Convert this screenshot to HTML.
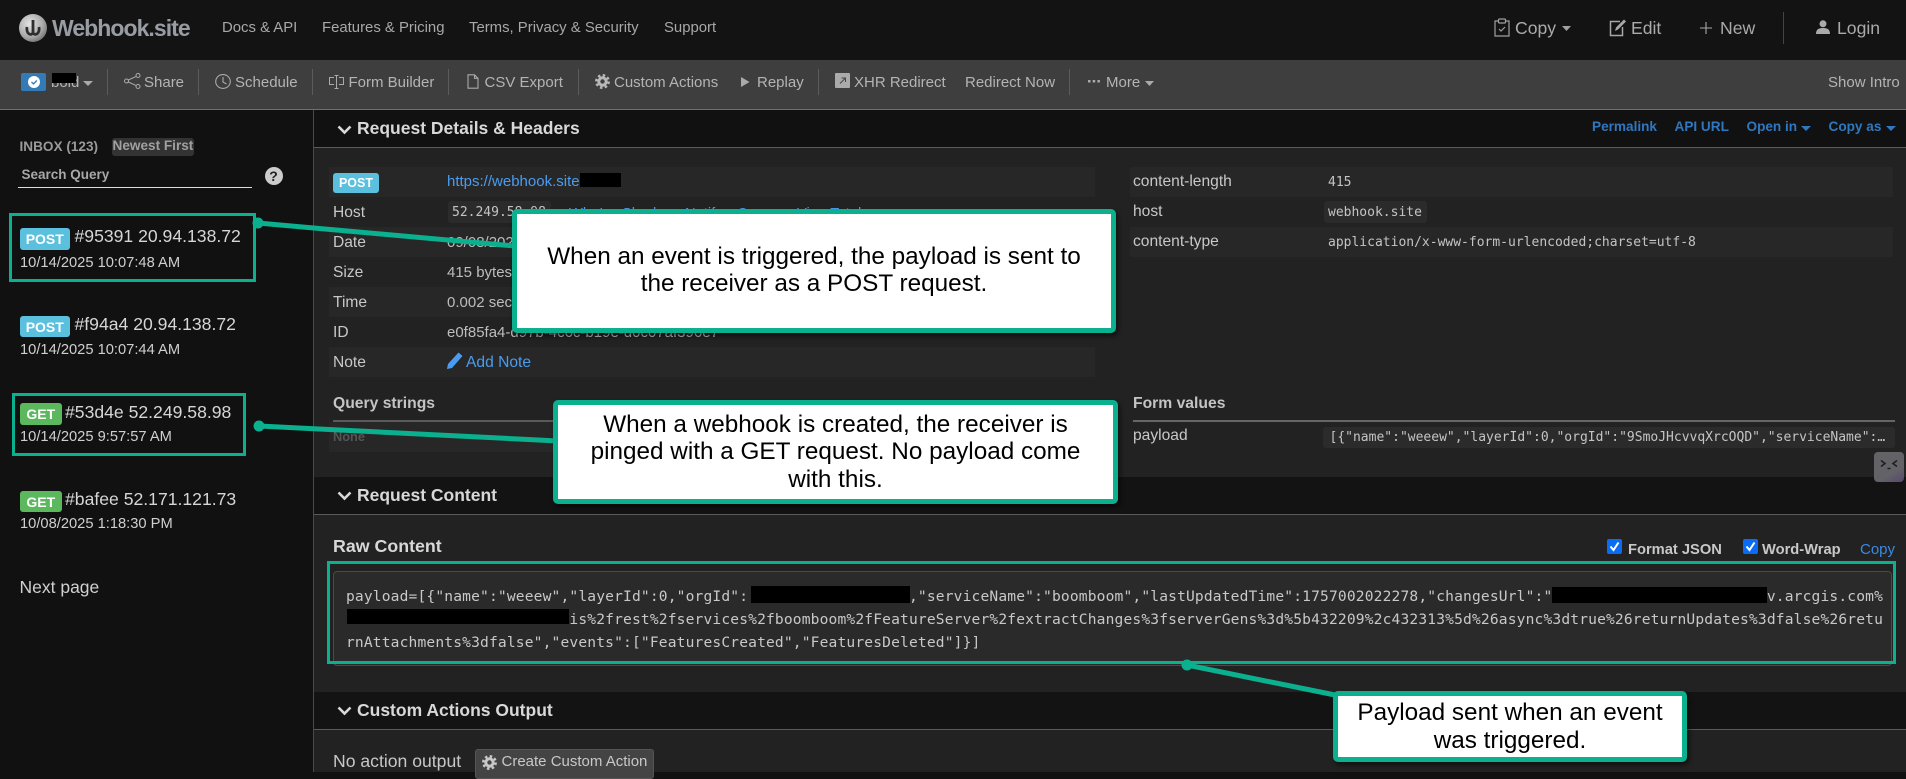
<!DOCTYPE html>
<html lang="en"><head><meta charset="utf-8"><title>Webhook.site</title>
<style>
*{box-sizing:border-box}
html,body{margin:0;padding:0;width:1906px;height:772px;overflow:hidden;background:#111;font-family:"Liberation Sans",Arial,sans-serif}
.a{position:absolute}
.t{position:absolute;white-space:pre;line-height:20px}
.nav{color:#a8a8a8;font-size:14.9px}
.navr{color:#aaa;font-size:17.6px}
.tb{color:#b4b4b4;font-size:15px}
.div{position:absolute;width:1px;top:69px;height:26px;background:#5c5c5c}
.lbl{color:#c8c8c8;font-size:15.6px}
.val{color:#bdbdbd;font-size:15px}
.h{color:#d8d8d8;font-size:17.5px;font-weight:bold}
.sub{color:#c4c4c4;font-size:15.7px;font-weight:bold}
.lnk{color:#2f78bf;font-size:13.6px;font-weight:bold}
.m{font-family:"DejaVu Sans Mono","Liberation Mono",monospace;font-size:13px;color:#c4c4c4}
.raw{font-family:"DejaVu Sans Mono","Liberation Mono",monospace;font-size:14.6px;letter-spacing:.15px;color:#c8c8c8}
.badge{position:absolute;border-radius:3px;color:#fff;font-weight:bold;font-size:14px;display:flex;align-items:center;justify-content:center}
.post{background:#5bc0de}.get{background:#5cb85c}
.ip{color:#d6d6d6;font-size:17.6px}
.dt{color:#cfcfcf;font-size:14.7px}
.k{position:absolute;background:#000}
.row{position:absolute;height:30px;background:#272727}
.chip{position:absolute;background:#2b2b2b;border-radius:3px}
.callout{position:absolute;background:#fff;border:5px solid #0bb08f;border-radius:5px;box-shadow:2px 3px 5px rgba(0,0,0,.55);color:#000;font-size:24.3px;text-align:center;display:flex;align-items:center;justify-content:center}
.gb{position:absolute;border:3px solid #0bb08f}
.blue{color:#4a9cf0}
svg{position:absolute;overflow:visible}
</style></head>
<body>
<!-- nav -->
<div class="a" style="left:0;top:0;width:1906px;height:60px;background:#131313"></div>
<svg style="left:19px;top:14px" width="28" height="28" viewBox="0 0 28 28"><defs><radialGradient id="g" cx=".38" cy=".35" r=".8"><stop offset="0" stop-color="#e4e4e4"/><stop offset=".6" stop-color="#a8a8a8"/><stop offset="1" stop-color="#5c5c5c"/></radialGradient></defs><circle cx="14" cy="14" r="14" fill="url(#g)"/><path d="M14 6v13M8 13c-1 7 4 9 6 6c2 3 7 1 6-6" fill="none" stroke="#2f2f2f" stroke-width="2.800"/></svg>
<div class="t" style="left:52px;top:18px;color:#989ca3;font-size:23px;font-weight:bold;letter-spacing:-.95px">Webhook.site</div>
<div class="t nav" style="left:222px;top:18px">Docs &amp; API</div>
<div class="t nav" style="left:322px;top:18px">Features &amp; Pricing</div>
<div class="t nav" style="left:469px;top:18px">Terms, Privacy &amp; Security</div>
<div class="t nav" style="left:664px;top:18px">Support</div>
<svg style="left:1494px;top:18px" width="16" height="19" viewBox="0 0 16 19" fill="none" stroke="#a0a0a0" stroke-width="1.200"><path d="M4.500 3H1v15h14V3h-3.500"/><rect x="4.500" y="1" width="7" height="4" rx="1"/><path d="M5 11l2 2 4-4"/></svg>
<div class="t navr" style="left:1515px;top:18px">Copy</div>
<svg style="left:1562px;top:26px" width="9" height="5"><path d="M0 0h9L4.500 5z" fill="#a0a0a0"/></svg>
<svg style="left:1609px;top:18px" width="18" height="19" viewBox="0 0 18 19" fill="none" stroke="#a8a8a8" stroke-width="1.500"><path d="M11 3.500H1.500v14h12V9"/><path d="M6 13l1-3.500 8-8 2 2-8 8z" fill="#a8a8a8" stroke="none"/></svg>
<div class="t navr" style="left:1631px;top:18px">Edit</div>
<svg style="left:1700px;top:22px" width="12" height="12"><path d="M6 0v12M0 6h12" stroke="#a8a8a8" stroke-width="1.100"/></svg>
<div class="t navr" style="left:1720px;top:18px">New</div>
<div class="a" style="left:1783px;top:12px;width:1px;height:32px;background:#444"></div>
<svg style="left:1816px;top:20px" width="14" height="14" viewBox="0 0 14 14"><circle cx="7" cy="3.800" r="3.500" fill="#aaa"/><path d="M0 14c0-5 3-6 7-6s7 1 7 6z" fill="#aaa"/></svg>
<div class="t navr" style="left:1837px;top:18px">Login</div>

<!-- toolbar -->
<div class="a" style="left:0;top:60px;width:1906px;height:49px;background:#3e3e3e"></div>
<div class="a" style="left:0;top:109px;width:1906px;height:1px;background:#6f6f6f"></div>
<div class="a" style="left:21px;top:73px;width:25px;height:18px;background:#337ab7;border-radius:2px"></div>
<svg style="left:27px;top:75px" width="14" height="14"><circle cx="7" cy="7" r="6" fill="#fff"/><path d="M4.500 7l2 2L9.800 5.500" fill="none" stroke="#337ab7" stroke-width="1.300"/></svg>
<div class="t tb" style="left:51px;top:73px">bold</div>
<div class="k" style="left:52px;top:73px;width:24px;height:10px"></div>
<svg style="left:83px;top:81px" width="10" height="5"><path d="M0 0h10L5 5z" fill="#aaa"/></svg>
<div class="div" style="left:107px"></div>
<svg style="left:124px;top:73px" width="17" height="16" viewBox="0 0 17 16" fill="none" stroke="#aaa" stroke-width="1"><circle cx="14" cy="2.500" r="2"/><circle cx="14" cy="13.500" r="2"/><circle cx="2.500" cy="8" r="2"/><path d="M4.300 7L12.200 3.400M4.300 9L12.200 12.600"/></svg>
<div class="t tb" style="left:144px;top:73px">Share</div>
<div class="div" style="left:198px"></div>
<svg style="left:215px;top:74px" width="16" height="15" viewBox="0 0 16 15" fill="none" stroke="#aaa" stroke-width="1.100"><ellipse cx="8" cy="7.500" rx="7.300" ry="6.900"/><path d="M8 3v5l3.500 2"/></svg>
<div class="t tb" style="left:235px;top:73px">Schedule</div>
<div class="div" style="left:312px"></div>
<svg style="left:329px;top:75px" width="15" height="14" viewBox="0 0 15 14" fill="none" stroke="#aaa" stroke-width="1"><path d="M5 2.500H.5v7H5M10 2.500h4.500v7H10M7.500 1v12M5.500.5h4M5.500 13.500h4"/></svg>
<div class="t tb" style="left:348.500px;top:73px">Form Builder</div>
<div class="div" style="left:448px"></div>
<svg style="left:467px;top:74px" width="12" height="15" viewBox="0 0 12 15" fill="none" stroke="#aaa" stroke-width="1.100"><path d="M1 .8h6.500L11 4.300v9.900H1zM7.500.8v3.500H11"/></svg>
<div class="t tb" style="left:484.500px;top:73px">CSV Export</div>
<div class="div" style="left:578px"></div>
<svg style="left:595px;top:74px" width="15" height="15" viewBox="0 0 15 15" fill="none" stroke="#b8b8b8"><circle cx="7.500" cy="7.500" r="3.700" stroke-width="3"/><circle cx="7.500" cy="7.500" r="6.200" stroke-width="2.500" stroke-dasharray="2.500 2.370"/></svg>
<div class="t tb" style="left:614px;top:73px">Custom Actions</div>
<svg style="left:741px;top:77px" width="9" height="10"><path d="M0 0l8.500 5L0 10z" fill="#aaa"/></svg>
<div class="t tb" style="left:757px;top:73px">Replay</div>
<div class="div" style="left:818px"></div>
<svg style="left:835px;top:73px" width="15" height="15"><rect width="15" height="15" rx="1" fill="#aaa"/><path d="M5 10.500l5-5M6.500 5h4v4" fill="none" stroke="#444" stroke-width="1"/></svg>
<div class="t tb" style="left:854px;top:73px">XHR Redirect</div>
<div class="t tb" style="left:965px;top:73px">Redirect Now</div>
<div class="div" style="left:1069px"></div>
<svg style="left:1088px;top:80px" width="12" height="3"><path d="M0 0h2.500v2.500H0zM4.700 0h2.500v2.500H4.700zM9.400 0h2.500v2.500H9.400z" fill="#aaa"/></svg>
<div class="t tb" style="left:1106px;top:73px">More</div>
<svg style="left:1145px;top:81px" width="9" height="5"><path d="M0 0h9L4.500 5z" fill="#aaa"/></svg>
<div class="t tb" style="left:1828px;top:73px">Show Intro</div>

<!-- content backgrounds -->
<div class="a" style="left:313px;top:110px;width:1593px;height:662px;background:#222"></div>
<div class="a" style="left:313px;top:110px;width:1px;height:662px;background:#4a4a4a"></div>
<div class="a" style="left:314px;top:110px;width:1592px;height:37px;background:#111"></div>
<div class="a" style="left:314px;top:147px;width:1592px;height:1px;background:#5a5a5a"></div>
<div class="a" style="left:314px;top:477px;width:1592px;height:37px;background:#131313"></div>
<div class="a" style="left:314px;top:514px;width:1592px;height:1px;background:#5a5a5a"></div>
<div class="a" style="left:314px;top:692px;width:1592px;height:37px;background:#131313"></div>
<div class="a" style="left:314px;top:729px;width:1592px;height:1px;background:#5a5a5a"></div>

<!-- sidebar -->
<div class="t" style="left:19.500px;top:137px;color:#9a9a9a;font-size:13.600px;font-weight:bold">INBOX (123)</div>
<div class="a" style="left:112px;top:138px;width:82px;height:18px;background:#333;border-radius:3px"></div>
<div class="t" style="left:112.500px;top:136px;color:#a0a0a0;font-size:13.600px;font-weight:bold">Newest First</div>
<div class="t" style="left:21.500px;top:165px;color:#a8a8a8;font-size:13.500px;font-weight:bold">Search Query</div>
<div class="a" style="left:18px;top:187px;width:234px;height:1px;background:#ddd"></div>
<div class="a" style="left:264.500px;top:167px;width:18px;height:18px;border-radius:50%;background:#ccc;color:#222;font-size:14px;font-weight:bold;text-align:center;line-height:18px">?</div>

<div class="badge post" style="left:19.500px;top:228px;width:50.500px;height:22px">POST</div>
<div class="t ip" style="left:74.500px;top:226px">#95391 20.94.138.72</div>
<div class="t dt" style="left:20px;top:253px">10/14/2025 10:07:48 AM</div>

<div class="badge post" style="left:19.500px;top:316px;width:50.500px;height:21px">POST</div>
<div class="t ip" style="left:74.500px;top:314px">#f94a4 20.94.138.72</div>
<div class="t dt" style="left:20px;top:340px">10/14/2025 10:07:44 AM</div>

<div class="badge get" style="left:19.500px;top:403px;width:42.500px;height:22px">GET</div>
<div class="t ip" style="left:65px;top:402px">#53d4e 52.249.58.98</div>
<div class="t dt" style="left:20px;top:427px">10/14/2025 9:57:57 AM</div>

<div class="badge get" style="left:19.500px;top:491px;width:42.500px;height:21px">GET</div>
<div class="t ip" style="left:65px;top:489px">#bafee 52.171.121.73</div>
<div class="t dt" style="left:20px;top:514px">10/08/2025 1:18:30 PM</div>

<div class="t" style="left:19.500px;top:577px;color:#d0d0d0;font-size:17.500px">Next page</div>

<!-- section 1 -->
<svg style="left:337px;top:125px" width="15" height="9"><path d="M1.500 1.500L7.500 7.500L13.500 1.500" fill="none" stroke="#d8d8d8" stroke-width="2.600"/></svg>
<div class="t h" style="left:357px;top:118px">Request Details &amp; Headers</div>
<div class="t lnk" style="left:1592px;top:117px">Permalink</div>
<div class="t lnk" style="left:1674.500px;top:117px">API URL</div>
<div class="t lnk" style="left:1746.500px;top:117px">Open in</div>
<svg style="left:1801px;top:126px" width="10" height="5"><path d="M0 0h10L5 5z" fill="#2f78bf"/></svg>
<div class="t lnk" style="left:1828.500px;top:117px">Copy as</div>
<svg style="left:1886px;top:126px" width="10" height="5"><path d="M0 0h10L5 5z" fill="#2f78bf"/></svg>

<!-- left table -->
<div class="row" style="left:329px;top:167px;width:766px"></div>
<div class="row" style="left:329px;top:227px;width:766px"></div>
<div class="row" style="left:329px;top:287px;width:766px"></div>
<div class="row" style="left:329px;top:347px;width:766px"></div>
<div class="badge post" style="left:333px;top:173px;width:46px;height:20px;font-size:12.500px">POST</div>
<div class="t blue" style="left:447px;top:171.500px;font-size:15px">https://webhook.site</div>
<div class="k" style="left:580px;top:173px;width:41px;height:14px"></div>
<div class="t lbl" style="left:333px;top:202.500px">Host</div>
<div class="chip" style="left:448px;top:201px;width:103px;height:22px"></div>
<div class="t m" style="left:452px;top:203px">52.249.58.98</div>
<div class="t blue" style="left:569px;top:203.500px;font-size:14.700px">WhoIs</div>
<div class="t blue" style="left:622px;top:203.500px;font-size:14.700px">Shodan</div>
<div class="t blue" style="left:685px;top:203.500px;font-size:14.700px">Notify</div>
<div class="t blue" style="left:737px;top:203.500px;font-size:14.700px">Censys</div>
<div class="t blue" style="left:797px;top:203.500px;font-size:14.700px">VirusTotal</div>
<div class="t lbl" style="left:333px;top:232.500px">Date</div>
<div class="t val" style="left:447px;top:232.500px">09/08/2025 12:00:22</div>
<div class="t lbl" style="left:333px;top:262.500px">Size</div>
<div class="t val" style="left:447px;top:262.500px">415 bytes</div>
<div class="t lbl" style="left:333px;top:292.500px">Time</div>
<div class="t val" style="left:447px;top:292.500px">0.002 sec</div>
<div class="t lbl" style="left:333px;top:322.500px">ID</div>
<div class="t val" style="left:447px;top:322.500px">e0f85fa4-d97b-4c6c-b19e-d0c07af396e7</div>
<div class="t lbl" style="left:333px;top:352.500px">Note</div>
<svg style="left:447px;top:352px" width="16" height="17" viewBox="0 0 16 17"><path d="M11.500.5l4 3.500L5 16l-5 1 1-5z" fill="#4a9cf0"/></svg>
<div class="t blue" style="left:466px;top:352.500px;font-size:15.600px">Add Note</div>
<div class="t sub" style="left:333px;top:394px">Query strings</div>
<div class="a" style="left:333px;top:420px;width:767px;height:2px;background:#5a5a5a"></div>
<div class="row" style="left:329px;top:422px;width:766px;height:30px"></div>
<div class="t" style="left:333px;top:427px;color:#555;font-size:12.800px;font-weight:bold">None</div>

<!-- right table -->
<div class="row" style="left:1130px;top:167px;width:763px"></div>
<div class="row" style="left:1130px;top:227px;width:763px"></div>
<div class="t lbl" style="left:1133px;top:172px">content-length</div>
<div class="t m" style="left:1328px;top:173px">415</div>
<div class="t lbl" style="left:1133px;top:202px">host</div>
<div class="chip" style="left:1324px;top:201px;width:103px;height:22px"></div>
<div class="t m" style="left:1328px;top:203px">webhook.site</div>
<div class="t lbl" style="left:1133px;top:232px">content-type</div>
<div class="t m" style="left:1328px;top:233px">application/x-www-form-urlencoded;charset=utf-8</div>
<div class="t sub" style="left:1133px;top:394px">Form values</div>
<div class="a" style="left:1133px;top:420px;width:762px;height:2px;background:#666"></div>
<div class="t lbl" style="left:1133px;top:426px">payload</div>
<div class="chip" style="left:1323px;top:427px;width:572px;height:21px"></div>
<div class="t m" style="left:1329.500px;top:428px">[{"name":"weeew","layerId":0,"orgId":"9SmoJHcvvqXrcOQD","serviceName":…</div>
<div class="a" style="left:1874px;top:452px;width:30px;height:30px;border-radius:4px;background:linear-gradient(150deg,#636367 65%,#57486f)"></div>
<svg style="left:1880px;top:459px" width="18" height="12" fill="none" stroke="#1f1f22" stroke-width="1.600"><path d="M1 1.500l4 3-4 3M17 1.500l-4 3 4 3M7.500 9.500h3"/></svg>

<!-- section 2 -->
<svg style="left:337px;top:491px" width="15" height="9"><path d="M1.500 1.500L7.500 7.500L13.500 1.500" fill="none" stroke="#d8d8d8" stroke-width="2.600"/></svg>
<div class="t h" style="left:357px;top:485px">Request Content</div>
<div class="t h" style="left:333px;top:536px;font-size:17.800px">Raw Content</div>
<svg style="left:1607px;top:539px" width="15" height="15"><rect width="15" height="15" rx="2" fill="#0a6cf5"/><path d="M3.500 7.500l3 3.500 5-7.500" fill="none" stroke="#fff" stroke-width="2"/></svg>
<div class="t" style="left:1628px;top:540px;color:#c8c8c8;font-size:14.700px;font-weight:bold">Format JSON</div>
<svg style="left:1743px;top:539px" width="15" height="15"><rect width="15" height="15" rx="2" fill="#0a6cf5"/><path d="M3.500 7.500l3 3.500 5-7.500" fill="none" stroke="#fff" stroke-width="2"/></svg>
<div class="t" style="left:1762px;top:540px;color:#c8c8c8;font-size:14.700px;font-weight:bold">Word-Wrap</div>
<div class="t" style="left:1860px;top:540px;color:#3a8ae0;font-size:15px">Copy</div>
<div class="a" style="left:333px;top:571px;width:1559px;height:95px;background:#2a2a2a;border:1px solid #4a4a4a;border-radius:4px"></div>
<div class="t raw" style="left:346px;top:587px">payload=[{"name":"weeew","layerId":0,"orgId":                  ,"serviceName":"boomboom","lastUpdatedTime":1757002022278,"changesUrl":"                        v.arcgis.com%</div>
<div class="t raw" style="left:346px;top:610px">                         is%2frest%2fservices%2fboomboom%2fFeatureServer%2fextractChanges%3fserverGens%3d%5b432209%2c432313%5d%26async%3dtrue%26returnUpdates%3dfalse%26retu</div>
<div class="t raw" style="left:346px;top:633px">rnAttachments%3dfalse","events":["FeaturesCreated","FeaturesDeleted"]}]</div>
<div class="k" style="left:751px;top:586px;width:159px;height:17px"></div>
<div class="k" style="left:1552px;top:587px;width:215px;height:16px"></div>
<div class="k" style="left:347px;top:609px;width:222px;height:15px"></div>
<div class="gb" style="left:327px;top:561px;width:1569px;height:103px"></div>

<!-- section 3 -->
<svg style="left:337px;top:706px" width="15" height="9"><path d="M1.500 1.500L7.500 7.500L13.500 1.500" fill="none" stroke="#d8d8d8" stroke-width="2.600"/></svg>
<div class="t h" style="left:357px;top:700px">Custom Actions Output</div>
<div class="t" style="left:333px;top:751px;color:#c8c8c8;font-size:17.600px">No action output</div>
<div class="a" style="left:475px;top:749px;width:179px;height:30px;background:#444;border:1px solid #555;border-radius:3px"></div>
<svg style="left:482px;top:755px" width="15" height="15" viewBox="0 0 15 15" fill="none" stroke="#c8c8c8"><circle cx="7.500" cy="7.500" r="3.700" stroke-width="3"/><circle cx="7.500" cy="7.500" r="6.200" stroke-width="2.500" stroke-dasharray="2.500 2.370"/></svg>
<div class="t" style="left:501.500px;top:752px;color:#c8c8c8;font-size:15px">Create Custom Action</div>

<!-- annotations -->
<div class="gb" style="left:9px;top:213px;width:247px;height:69px"></div>
<div class="gb" style="left:12px;top:393px;width:234px;height:63px"></div>
<svg style="left:0;top:0" width="1906" height="772">
<g fill="#0bb08f" stroke="#0bb08f" stroke-width="5"><path d="M258 223L515 246"/><path d="M259 426L558 441"/><path d="M1187 665L1340 696"/></g>
<circle cx="258" cy="223" r="5.500" fill="#0bb08f"/><circle cx="259" cy="426" r="5.500" fill="#0bb08f"/><circle cx="1187" cy="665" r="5.500" fill="#0bb08f"/>
</svg>
<div class="callout" style="left:512px;top:209px;width:604px;height:124px;line-height:27px;padding-bottom:2px">When an event is triggered, the payload is sent to<br>the receiver as a POST request.</div>
<div class="callout" style="left:553px;top:400px;width:565px;height:104px;line-height:27.500px">When a webhook is created, the receiver is<br>pinged with a GET request. No payload come<br>with this.</div>
<div class="callout" style="left:1333px;top:691px;width:354px;height:71px;line-height:27.500px">Payload sent when an event<br>was triggered.</div>
</body></html>
